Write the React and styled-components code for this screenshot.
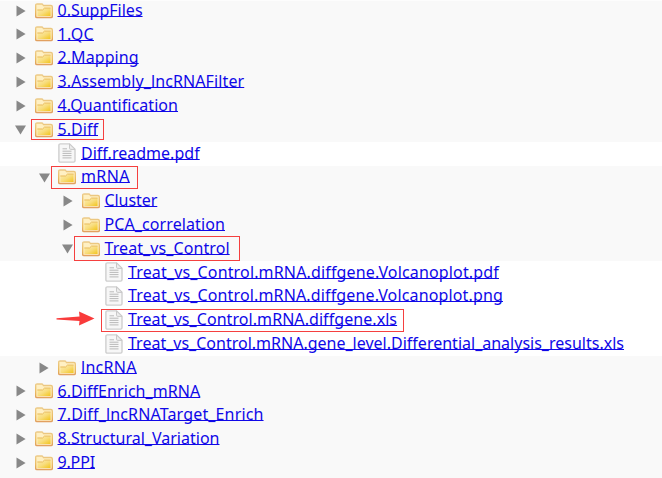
import React from 'react';
import styled, { createGlobalStyle, css } from 'styled-components';

const GlobalStyle = createGlobalStyle`
  body {
    margin: 0;
    background: #f9f9f9;
    overflow: hidden;
  }
`;

const Tree = styled.ul`
  box-sizing: border-box;
  height: 478px;
  margin: 0;
  padding: 0;
  list-style: none;
  overflow: hidden;
  border-top: 1px solid #fdfdfd;
  font-family: 'Noto Sans', 'Open Sans', sans-serif;
  font-size: 16px;
`;

const Row = styled.li`
  position: relative;
  box-sizing: border-box;
  display: flex;
  align-items: center;
  height: 23.8px;
  padding-left: ${(p) => 15.5 + p.$depth * 23.5}px;
  background: ${(p) => (p.$file ? '#ffffff' : '#f9f9f9')};

  &:first-child {
    margin-top: -1.8px;
  }
`;

const Toggle = styled.span`
  display: flex;
  flex: none;
  align-items: center;
  width: 19px;
  height: 100%;
`;

const TriangleRight = styled.svg`
  width: 10px;
  height: 12px;
  margin-bottom: 1px;
  fill: #888888;
`;

const TriangleDown = styled.svg`
  width: 11px;
  height: 10px;
  margin-left: -0.5px;
  fill: #888888;
`;

const IconSlot = styled.span`
  display: flex;
  flex: none;
  width: 23px;
  padding-bottom: 1px;
`;

const IconSvg = styled.svg`
  width: 18px;
  height: ${(p) => (p.$tall ? 20 : 16)}px;
`;

const Link = styled.a`
  padding-bottom: 0.8px;
  color: #1008e8;
  line-height: 23.8px;
  white-space: nowrap;
  letter-spacing: ${(p) => p.$tracking}px;
  text-decoration: underline;
  text-decoration-thickness: 1px;
  text-underline-offset: 0;
  text-decoration-skip-ink: none;
`;

const Highlight = styled.span`
  position: absolute;
  box-sizing: border-box;
  border: 1px solid #f5403f;
  ${({ $box: [left, top, width, height] }) => css`
    left: ${left}px;
    top: ${top}px;
    width: ${width}px;
    height: ${height}px;
  `}
`;

const Pointer = styled.svg`
  position: absolute;
  left: 56px;
  top: 2.5px;
  width: 39px;
  height: 15px;
  fill: #f93b3b;
`;

function FolderIcon() {
  return (
    <IconSvg viewBox="0 0 18 16">
      <defs>
        <linearGradient id="folder" x1="0" y1="0" x2="0" y2="1">
          <stop offset="0" stopColor="#ecca88" />
          <stop offset="0.6" stopColor="#e9b95b" />
          <stop offset="1" stopColor="#dc9850" />
        </linearGradient>
        <linearGradient id="flap" x1="0" y1="0" x2="1" y2="1">
          <stop offset="0" stopColor="#fdecae" />
          <stop offset="0.5" stopColor="#f8dd7e" />
          <stop offset="1" stopColor="#f2c51c" />
        </linearGradient>
      </defs>
      <path d="M.7 2.2Q.7 1 2 1h4.700q.9 0 1.300.8l.4.700H16q1.300 0 1.300 1.300v9.600q0 1.300-1.300 1.300H2Q.7 14.700.7 13.400Z" fill="#fff0c3" stroke="url(#folder)" strokeWidth="1.3" />
      <path d="M2.400 7.300h5l2-1.900h6.200v7.600H2.400Z" fill="url(#flap)" />
      <path d="M2.300 7h5.200l2-1.900h6.200" fill="none" stroke="#e8b955" strokeWidth="1" />
      <path d="M1 14.400h16" stroke="#e2a060" strokeWidth="1.200" />
    </IconSvg>
  );
}

function FileIcon() {
  return (
    <IconSvg $tall viewBox="0 0 18 20">
      <path d="M2 .9h9.500L17 6.400v11.300q0 1.400-1.400 1.400H2.300Q.9 19.100.9 17.700V2.200Q.9.9 2.200.9Z" fill="#f7f7f7" stroke="#cfcfcf" strokeWidth="1.400" />
      <path d="M11.500 1v4.200q0 1.200 1.200 1.200H17Z" fill="#ededed" stroke="#c8c8c8" strokeWidth="1" />
      <path d="M4.500 5.800H9M4.500 8.200h9M4.500 10.400h9M4.500 12.600h9M4.500 14.900h9" fill="none" stroke="#b9b9b9" strokeWidth="1" />
    </IconSvg>
  );
}

const entries = [
  { name: '0.SuppFiles', depth: 0, tracking: 0 },
  { name: '1.QC', depth: 0, tracking: 0.3 },
  { name: '2.Mapping', depth: 0, tracking: 0.08 },
  { name: '3.Assembly_lncRNAFilter', depth: 0, tracking: 0.11 },
  { name: '4.Quantification', depth: 0, tracking: 0.06 },
  { name: '5.Diff', depth: 0, open: true, tracking: 0.04, box: [31, 1.2, 73, 21] },
  { name: 'Diff.readme.pdf', depth: 1, file: true, tracking: 0.02 },
  { name: 'mRNA', depth: 1, open: true, tracking: 0.4, box: [51, 0.2, 87, 23] },
  { name: 'Cluster', depth: 2, tracking: -0.06 },
  { name: 'PCA_correlation', depth: 2, tracking: 0.1 },
  { name: 'Treat_vs_Control', depth: 2, open: true, tracking: 0.09, box: [74, -1.2, 166, 25] },
  { name: 'Treat_vs_Control.mRNA.diffgene.Volcanoplot.pdf', depth: 3, file: true, tracking: 0.154 },
  { name: 'Treat_vs_Control.mRNA.diffgene.Volcanoplot.png', depth: 3, file: true, tracking: 0.146 },
  { name: 'Treat_vs_Control.mRNA.diffgene.xls', depth: 3, file: true, tracking: 0.065, box: [101, 0.4, 303, 23], pointer: true },
  { name: 'Treat_vs_Control.mRNA.gene_level.Differential_analysis_results.xls', depth: 3, file: true, tracking: 0.005 },
  { name: 'lncRNA', depth: 1, tracking: 0.3 },
  { name: '6.DiffEnrich_mRNA', depth: 0, tracking: 0.06 },
  { name: '7.Diff_lncRNATarget_Enrich', depth: 0, tracking: 0.15 },
  { name: '8.Structural_Variation', depth: 0, tracking: 0.01 },
  { name: '9.PPI', depth: 0, tracking: -0.16 },
];

function Disclosure({ file, open }) {
  if (file) return <Toggle />;
  return (
    <Toggle>
      {open ? (
        <TriangleDown viewBox="0 0 11 10"><path d="M0 .4h11L5.500 9.600Z" /></TriangleDown>
      ) : (
        <TriangleRight viewBox="0 0 10 12"><path d="M.5.500 9.600 6 .5 11.500Z" /></TriangleRight>
      )}
    </Toggle>
  );
}

export default function App() {
  return (
    <>
      <GlobalStyle />
      <Tree>
        {entries.map(({ name, depth, file, open, tracking, box, pointer }) => (
          <Row key={name} $depth={depth} $file={file}>
            <Disclosure file={file} open={open} />
            <IconSlot>{file ? <FileIcon /> : <FolderIcon />}</IconSlot>
            <Link href="#" $tracking={tracking}>{name}</Link>
            {box && <Highlight $box={box} />}
            {pointer && (
              <Pointer viewBox="0 0 39 15">
                <path d="M.5 7.200 23.500 5.600 23 .5 38.500 7.500 23 14.500 23.500 10 .5 8.500Z" />
              </Pointer>
            )}
          </Row>
        ))}
      </Tree>
    </>
  );
}
